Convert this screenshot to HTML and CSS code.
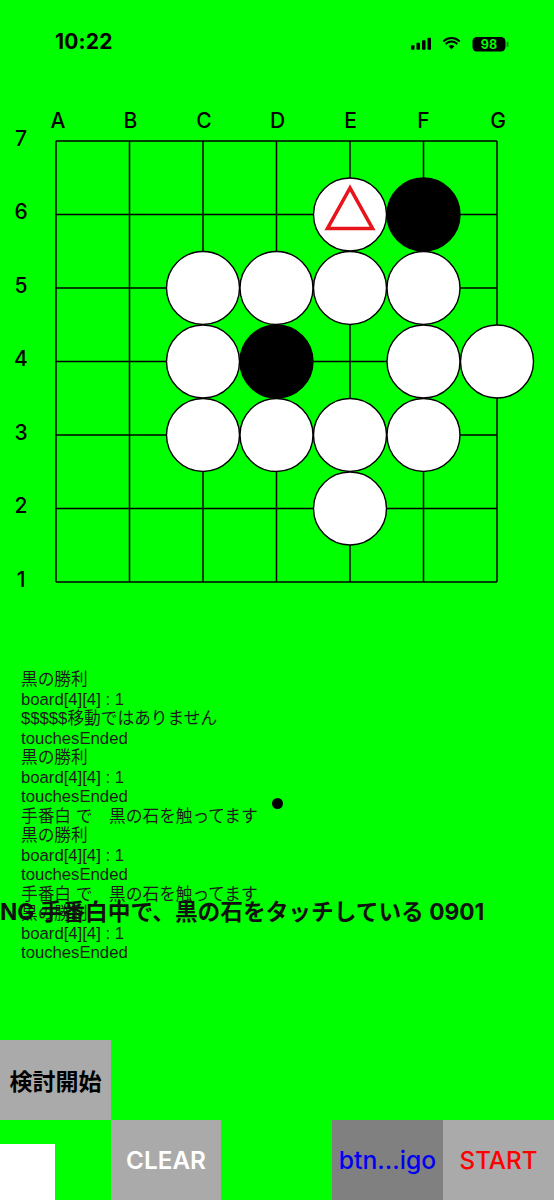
FILE: index.html
```html
<!DOCTYPE html>
<html lang="ja">
<head>
<meta charset="utf-8">
<title>碁盤</title>
<link rel="stylesheet" href="styles.css">
</head>
<body>
<div class="screen">
  <div class="statusbar">
    <span class="time">10:22</span>
    <div class="sys">
      <svg class="sys-icons" width="100" height="20" viewBox="410 30 100 20">
        <rect x="411" y="43.3" width="3.5" height="4.5" rx="0.8"/>
        <rect x="416.5" y="40.8" width="3.5" height="7" rx="0.8"/>
        <rect x="422" y="38.3" width="3.5" height="9.5" rx="0.8"/>
        <rect x="427.5" y="35.8" width="3.5" height="12" rx="0.8"/>
        <path d="M451.5 47.6 L448.6 44.2 A4.3 4.3 0 0 1 454.4 44.2 Z"/>
        <path d="M446.3 41.6 A7.6 7.6 0 0 1 456.7 41.6" fill="none" stroke="#000" stroke-width="2.1" stroke-linecap="round"/>
        <path d="M443.9 38.9 A11.2 11.2 0 0 1 459.1 38.9" fill="none" stroke="#000" stroke-width="2.1" stroke-linecap="round"/>
        <rect x="472.5" y="35" width="33" height="14.5" rx="4.5"/>
        <rect x="506.6" y="39.8" width="1.8" height="5" rx="0.9" opacity="0.5"/>
        <text x="489" y="46.6" class="batt">98</text>
      </svg>
    </div>
  </div>

  <svg class="board" width="554" height="520" viewBox="0 83 554 520">
    <g class="lines">
      <line x1="56" y1="141" x2="56" y2="582"/>
      <line x1="129.5" y1="141" x2="129.5" y2="582"/>
      <line x1="203" y1="141" x2="203" y2="582"/>
      <line x1="276.5" y1="141" x2="276.5" y2="582"/>
      <line x1="350" y1="141" x2="350" y2="582"/>
      <line x1="423.5" y1="141" x2="423.5" y2="582"/>
      <line x1="497" y1="141" x2="497" y2="582"/>
      <line x1="56" y1="141" x2="497" y2="141"/>
      <line x1="56" y1="214.5" x2="497" y2="214.5"/>
      <line x1="56" y1="288" x2="497" y2="288"/>
      <line x1="56" y1="361.5" x2="497" y2="361.5"/>
      <line x1="56" y1="435" x2="497" y2="435"/>
      <line x1="56" y1="508.5" x2="497" y2="508.5"/>
      <line x1="56" y1="582" x2="497" y2="582"/>
    </g>
    <g class="cols">
      <text x="58" y="128">A</text>
      <text x="130.5" y="128">B</text>
      <text x="204" y="128">C</text>
      <text x="277.5" y="128">D</text>
      <text x="350.5" y="128">E</text>
      <text x="423.5" y="128">F</text>
      <text x="498" y="128">G</text>
    </g>
    <g class="rows">
      <text x="21" y="145.5">7</text>
      <text x="21" y="219">6</text>
      <text x="21" y="292.5">5</text>
      <text x="21" y="366">4</text>
      <text x="21" y="439.5">3</text>
      <text x="21" y="513">2</text>
      <text x="21" y="586.5">1</text>
    </g>
    <g class="stones">
      <circle class="w" cx="350" cy="214.5" r="36.5"/>
      <circle class="b" cx="423.5" cy="214.5" r="36.5"/>
      <circle class="w" cx="203" cy="288" r="36.5"/>
      <circle class="w" cx="276.5" cy="288" r="36.5"/>
      <circle class="w" cx="350" cy="288" r="36.5"/>
      <circle class="w" cx="423.5" cy="288" r="36.5"/>
      <circle class="w" cx="203" cy="361.5" r="36.5"/>
      <circle class="b" cx="276.5" cy="361.5" r="36.5"/>
      <circle class="w" cx="423.5" cy="361.5" r="36.5"/>
      <circle class="w" cx="497" cy="361.5" r="36.5"/>
      <circle class="w" cx="203" cy="435" r="36.5"/>
      <circle class="w" cx="276.5" cy="435" r="36.5"/>
      <circle class="w" cx="350" cy="435" r="36.5"/>
      <circle class="w" cx="423.5" cy="435" r="36.5"/>
      <circle class="w" cx="350" cy="508.5" r="36.5"/>
    </g>
    <polygon class="mark" points="350,188 327.5,228.5 372.5,228.5"/>
  </svg>

  <div class="log">
    <div class="log-line">黒の勝利</div>
    <div class="log-line">board[4][4] : 1</div>
    <div class="log-line">$$$$$移動ではありません</div>
    <div class="log-line">touchesEnded</div>
    <div class="log-line">黒の勝利</div>
    <div class="log-line">board[4][4] : 1</div>
    <div class="log-line">touchesEnded</div>
    <div class="log-line">手番白 で　黒の石を触ってます</div>
    <div class="log-line">黒の勝利</div>
    <div class="log-line">board[4][4] : 1</div>
    <div class="log-line">touchesEnded</div>
    <div class="log-line">手番白 で　黒の石を触ってます</div>
    <div class="log-line">黒の勝利</div>
    <div class="log-line">board[4][4] : 1</div>
    <div class="log-line">touchesEnded</div>
  </div>

  <div class="alert">NG 手番白中で、黒の石をタッチしている 0901</div>
  <div class="touch-dot"></div>

  <div class="controls">
    <div class="row-top">
      <div class="btn btn-kento">検討開始</div>
    </div>
    <div class="row-bottom">
      <div class="cell cell-field"><div class="field"></div></div>
      <div class="btn btn-clear">CLEAR</div>
      <div class="cell"></div>
      <div class="btn btn-igo">btn...igo</div>
      <div class="btn btn-start">START</div>
    </div>
  </div>
</div>
</body>
</html>
```

FILE: styles.css
```css
html, body {
  margin: 0;
  padding: 0;
  background: #00ff00;
}

.screen {
  position: relative;
  width: 554px;
  height: 1200px;
  overflow: hidden;
  background: #00ff00;
  display: flex;
  flex-direction: column;
  font-family: "Liberation Sans", "Noto Sans CJK JP", sans-serif;
}

.statusbar {
  height: 83px;
  flex: none;
  display: flex;
  align-items: center;
  justify-content: space-between;
  padding: 0 44px 0 55px;
}

.time {
  font-family: "Inter", "Liberation Sans", sans-serif;
  font-weight: 700;
  font-size: 21px;
  letter-spacing: 0.2px;
  color: #000;
  line-height: 1;
}

.sys {
  display: flex;
  align-items: center;
}

.sys-icons {
  display: block;
  fill: #000;
}

.batt {
  font-family: "Inter", "Liberation Sans", sans-serif;
  font-weight: 700;
  font-size: 12.5px;
  fill: #00ff00;
  text-anchor: middle;
}

.board {
  display: block;
  flex: none;
}

.lines line {
  stroke: #000;
  stroke-width: 1.5;
}

.cols text,
.rows text {
  font-family: "Inter", "Liberation Sans", sans-serif;
  font-weight: 500;
  font-size: 21px;
  fill: #000;
  text-anchor: middle;
}

.stones circle {
  stroke: #000;
  stroke-width: 1.4;
}

.stones .w { fill: #fff; }
.stones .b { fill: #000; }

.mark {
  fill: none;
  stroke: #e8141c;
  stroke-width: 3.6;
  stroke-linejoin: miter;
}

.log {
  flex: none;
  margin-top: 67px;
  padding-left: 21px;
  font-size: 16.7px;
  line-height: 19.5px;
  color: #1c1c1c;
}

.log-line {
  white-space: pre;
  height: 19.5px;
}

.alert {
  position: absolute;
  left: 0;
  top: 898px;
  font-family: "Inter", "Noto Sans CJK JP", sans-serif;
  font-weight: 700;
  font-size: 22.7px;
  line-height: 28px;
  color: #111;
  white-space: nowrap;
}

.touch-dot {
  position: absolute;
  left: 271.5px;
  top: 797.5px;
  width: 11px;
  height: 11px;
  border-radius: 50%;
  background: #000;
}

.controls {
  margin-top: auto;
  flex: none;
}

.row-top {
  display: flex;
  height: 80px;
}

.row-bottom {
  display: grid;
  grid-template-columns: 111px 110px 111px 111px 111px;
  height: 80px;
}

.btn {
  display: flex;
  align-items: center;
  justify-content: center;
  background: #aaaaaa;
  font-family: "Inter", "Noto Sans CJK JP", sans-serif;
  font-size: 24px;
}

.btn-kento {
  width: 111px;
  font-family: "Noto Sans CJK JP", sans-serif;
  font-weight: 700;
  font-size: 23px;
  color: #000;
}

.btn-clear {
  color: #fff;
  font-weight: 600;
  font-size: 24.3px;
}

.btn-igo {
  background: #808080;
  color: #0000ee;
  font-weight: 500;
  font-size: 24.7px;
}

.btn-start {
  color: #ff0000;
  font-weight: 500;
  font-size: 24.2px;
}

.cell-field {
  display: flex;
  align-items: flex-end;
}

.field {
  width: 55px;
  height: 56px;
  background: #fff;
}
```
